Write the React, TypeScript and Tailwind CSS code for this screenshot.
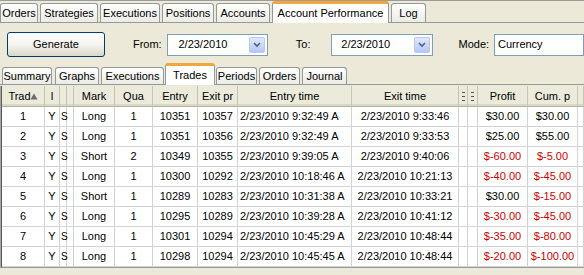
import React from "react";

type Row = {
  n: number;
  mark: string;
  qty: number;
  entry: number;
  exit: number;
  entryTime: string;
  exitTime: string;
  profit: string;
  cum: string;
};

const rows: Row[] = [
  { n: 1, mark: "Long", qty: 1, entry: 10351, exit: 10357, entryTime: "2/23/2010 9:32:49 A", exitTime: "2/23/2010 9:33:46", profit: "$30.00", cum: "$30.00" },
  { n: 2, mark: "Long", qty: 1, entry: 10351, exit: 10356, entryTime: "2/23/2010 9:32:49 A", exitTime: "2/23/2010 9:33:53", profit: "$25.00", cum: "$55.00" },
  { n: 3, mark: "Short", qty: 2, entry: 10349, exit: 10355, entryTime: "2/23/2010 9:39:05 A", exitTime: "2/23/2010 9:40:06", profit: "$-60.00", cum: "$-5.00" },
  { n: 4, mark: "Long", qty: 1, entry: 10300, exit: 10292, entryTime: "2/23/2010 10:18:46 A", exitTime: "2/23/2010 10:21:13", profit: "$-40.00", cum: "$-45.00" },
  { n: 5, mark: "Short", qty: 1, entry: 10289, exit: 10283, entryTime: "2/23/2010 10:31:38 A", exitTime: "2/23/2010 10:33:21", profit: "$30.00", cum: "$-15.00" },
  { n: 6, mark: "Long", qty: 1, entry: 10295, exit: 10289, entryTime: "2/23/2010 10:39:28 A", exitTime: "2/23/2010 10:41:12", profit: "$-30.00", cum: "$-45.00" },
  { n: 7, mark: "Long", qty: 1, entry: 10301, exit: 10294, entryTime: "2/23/2010 10:45:29 A", exitTime: "2/23/2010 10:48:44", profit: "$-35.00", cum: "$-80.00" },
  { n: 8, mark: "Long", qty: 1, entry: 10298, exit: 10294, entryTime: "2/23/2010 10:45:45 A", exitTime: "2/23/2010 10:48:44", profit: "$-20.00", cum: "$-100.00" },
];

const cols = "grid grid-cols-[43px_15px_7px_7px_41px_38px_45px_40px_114px_107px_9px_10px_50px_50px_1fr]";

function Tab({ label, w, selected, small }: { label: string; w: string; selected?: boolean; small?: boolean }) {
  if (selected) {
    return (
      <div className={`${w} h-[22px] mb-[-1px] flex items-center justify-center bg-white border border-b-0 border-[#919b9c] border-t-[3px] border-t-[#f2a73a] rounded-t-[3px] text-black`}>
        {label}
      </div>
    );
  }
  return (
    <div className={`${w} ${small ? "h-[17px]" : "h-[19px]"} flex items-center justify-center bg-gradient-to-b from-white to-[#ecebe4] border border-b-0 border-[#919b9c] rounded-t-[3px] text-black`}>
      {label}
    </div>
  );
}

function DateBox({ w, value, pl }: { w: string; value: string; pl: string }) {
  return (
    <div className={`${w} h-[22px] bg-white border border-[#7f9db9] flex items-center justify-between ${pl} pr-[2px]`}>
      <span>{value}</span>
      <div className="w-[16px] h-[16px] rounded-[2px] border border-[#b9c9ef] bg-gradient-to-b from-[#e0e9fe] to-[#b5c6f3] flex items-center justify-center">
        <svg width="8" height="6" viewBox="0 0 8 6">
          <path d="M1 1 L4 4 L7 1" fill="none" stroke="#4d6185" strokeWidth="1.6" />
        </svg>
      </div>
    </div>
  );
}

function HeadCell({ children }: { children?: React.ReactNode }) {
  return (
    <div className="h-full flex items-center justify-center overflow-hidden whitespace-nowrap border-r border-[#c7c4b4] text-black">
      {children}
    </div>
  );
}

function Dots() {
  return (
    <svg width="3" height="9" viewBox="0 0 3 9">
      <rect x="0" y="0" width="3" height="1" fill="#555" />
      <rect x="0" y="4" width="3" height="1" fill="#555" />
      <rect x="0" y="8" width="3" height="1" fill="#555" />
    </svg>
  );
}

function Cell({ children, red, align = "center", clip = true }: { children?: React.ReactNode; red?: boolean; align?: "center" | "left"; clip?: boolean }) {
  return (
    <div
      className={`h-full flex items-center whitespace-nowrap border-r border-[#d3d3d3] ${clip ? "overflow-hidden" : "overflow-visible"} ${
        align === "left" ? "justify-start pl-[2px]" : "justify-center"
      } ${red ? "text-[#cc0000]" : "text-black"}`}
    >
      {children}
    </div>
  );
}

export default function App() {
  return (
    <div className="w-[584px] h-[275px] overflow-hidden bg-[#ece9d8] border-t border-[#9c9c9c] font-['Liberation_Sans',Arial,sans-serif] text-[11px] leading-none">
      {/* top tabs */}
      <div className="h-[22px] flex items-end gap-[2px] border-b border-[#919b9c]">
        <Tab label="Orders" w="w-[38px]" />
        <Tab label="Strategies" w="w-[58px]" />
        <Tab label="Executions" w="w-[60px]" />
        <Tab label="Positions" w="w-[52px]" />
        <Tab label="Accounts" w="w-[54px]" />
        <Tab label="Account Performance" w="w-[117px]" selected />
        <Tab label="Log" w="w-[35px]" />
      </div>

      {/* controls */}
      <div className="mt-[8px] h-[27px] flex items-center">
        <button className="ml-[7px] w-[102px] h-[25px] rounded-[3px] border border-[#003c74] bg-gradient-to-b from-white via-[#f4f3ee] to-[#dcd7cb] text-black text-[11px]">
          Generate
        </button>
        <span className="ml-[28px] w-[36px]">From:</span>
        <DateBox w="w-[104px]" value="2/23/2010" pl="pl-[10px]" />
        <span className="ml-[28px] w-[37px]">To:</span>
        <DateBox w="w-[105px]" value="2/23/2010" pl="pl-[9px]" />
        <span className="ml-[26px] w-[37px]">Mode:</span>
        <div className="w-[90px] shrink-0 h-[22px] bg-white border border-[#7f9db9] flex items-center pl-[3px]">Currency</div>
      </div>

      {/* sub tabs */}
      <div className="mt-[4px] h-[23px] flex items-end border-b border-[#919b9c] pl-[2px]">
        <Tab label="Summary" w="w-[50px]" small />
        <div className="w-[3px]" />
        <Tab label="Graphs" w="w-[44px]" small />
        <div className="w-[2px]" />
        <Tab label="Executions" w="w-[63px]" small />
        <div className="w-[1px]" />
        <Tab label="Trades" w="w-[50px]" selected small />
        <div className="w-[1px]" />
        <Tab label="Periods" w="w-[41px]" small />
        <div className="w-[2px]" />
        <Tab label="Orders" w="w-[41px]" small />
        <div className="w-[2px]" />
        <Tab label="Journal" w="w-[45px]" small />
      </div>

      {/* grid */}
      <div className="mt-[1px] border-l border-[#a7a6aa]">
        <div className="border-l border-[#5a5a5a] border-b border-b-[#9a9a9a] bg-white">
          <div className={`${cols} h-[21px] bg-[#ebeadb] border-b border-[#b5b2a0] shadow-[inset_0_-2px_0_#dcd8c8]`}>
            <HeadCell>
              <span>Trad</span>
              <svg width="8" height="7" viewBox="0 0 8 7" className="ml-[-1px]">
                <path d="M4 0.5 L7.5 6.5 L0.5 6.5 Z" fill="#6b6b6b" />
              </svg>
            </HeadCell>
            <HeadCell>I</HeadCell>
            <HeadCell />
            <HeadCell />
            <HeadCell>Mark</HeadCell>
            <HeadCell>Qua</HeadCell>
            <HeadCell>Entry</HeadCell>
            <HeadCell>Exit pr</HeadCell>
            <HeadCell>Entry time</HeadCell>
            <HeadCell>Exit time</HeadCell>
            <HeadCell>
              <Dots />
            </HeadCell>
            <HeadCell>
              <Dots />
            </HeadCell>
            <HeadCell>Profit</HeadCell>
            <HeadCell>Cum. p</HeadCell>
            <HeadCell />
          </div>
          {rows.map((r) => (
            <div key={r.n} className={`${cols} h-[20px] border-b border-[#d3d3d3]`}>
              <Cell>{r.n}</Cell>
              <Cell>Y</Cell>
              <div className="h-full flex items-center border-r border-[#d3d3d3] pl-[1px] text-[10px] text-black overflow-visible">S</div>
              <Cell />
              <Cell>{r.mark}</Cell>
              <Cell>{r.qty}</Cell>
              <Cell>{r.entry}</Cell>
              <Cell>{r.exit}</Cell>
              <Cell align="left">{r.entryTime}</Cell>
              <Cell>{r.exitTime}</Cell>
              <Cell />
              <Cell />
              <Cell red={r.profit.startsWith("$-")}>{r.profit}</Cell>
              <Cell red={r.cum.startsWith("$-")}>{r.cum}</Cell>
              <Cell />
            </div>
          ))}
        </div>
      </div>
    </div>
  );
}
